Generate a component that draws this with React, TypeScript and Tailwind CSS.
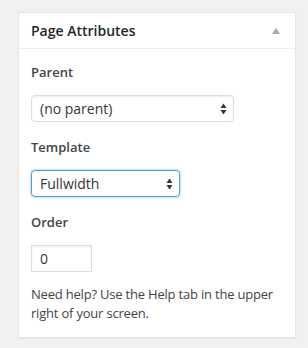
export default function App() {
  return (
    <div className="min-h-screen bg-[#f1f1f1] pt-3 pl-[18px] font-['Open_Sans',sans-serif]">
      <div className="w-[278px] bg-white border border-[#e5e5e5] shadow-[0_1px_1px_rgba(0,0,0,0.04)]">
        <div className="h-9 flex items-center justify-between px-3 border-b border-[#eee]">
          <h3 className="text-[14px] font-semibold text-[#23282d]">Page Attributes</h3>
          <svg width="10" height="8" viewBox="0 0 10 8" className="mr-[2px]">
            <path d="M5 1 L9 7 L1 7 Z" fill="#aaa" />
          </svg>
        </div>
        <div className="px-3 pt-[13px] pb-[14px] text-[#444]">
          <p className="text-[13px] font-semibold leading-5 text-[#444]">Parent</p>
          <div className="mt-[13px] w-[203px] h-[27px] flex items-center justify-between pl-2 pr-[6px] border border-[#ddd] rounded-[4px] shadow-[inset_0_1px_2px_rgba(0,0,0,0.07)]">
            <span className="text-[14px] text-[#32373c]">(no parent)</span>
            <Arrows />
          </div>
          <p className="mt-[15px] text-[13px] font-semibold leading-5 text-[#444]">Template</p>
          <div className="mt-[13px] w-[149px] h-[27px] flex items-center justify-between pl-2 pr-[6px] border border-[#5b9dd9] rounded-[4px] shadow-[0_0_2px_rgba(30,140,190,0.8)]">
            <span className="text-[14px] text-[#32373c]">Fullwidth</span>
            <Arrows />
          </div>
          <p className="mt-[15px] text-[13px] font-semibold leading-5 text-[#444]">Order</p>
          <div className="mt-[13px] w-[61px] h-[27px] flex items-center px-2 border border-[#ddd] shadow-[inset_0_1px_2px_rgba(0,0,0,0.07)]">
            <span className="text-[14px] text-[#32373c]">0</span>
          </div>
          <p className="mt-[13px] text-[13px] leading-[19px] tracking-[-0.2px] text-[#444]">
            Need help? Use the Help tab in the upper right of your screen.
          </p>
        </div>
      </div>
    </div>
  )
}

function Arrows() {
  return (
    <svg width="7" height="12" viewBox="0 0 7 12">
      <path d="M3.5 0.5 L6.5 5 L0.5 5 Z" fill="#333" />
      <path d="M3.5 11.5 L6.5 7 L0.5 7 Z" fill="#333" />
    </svg>
  )
}
